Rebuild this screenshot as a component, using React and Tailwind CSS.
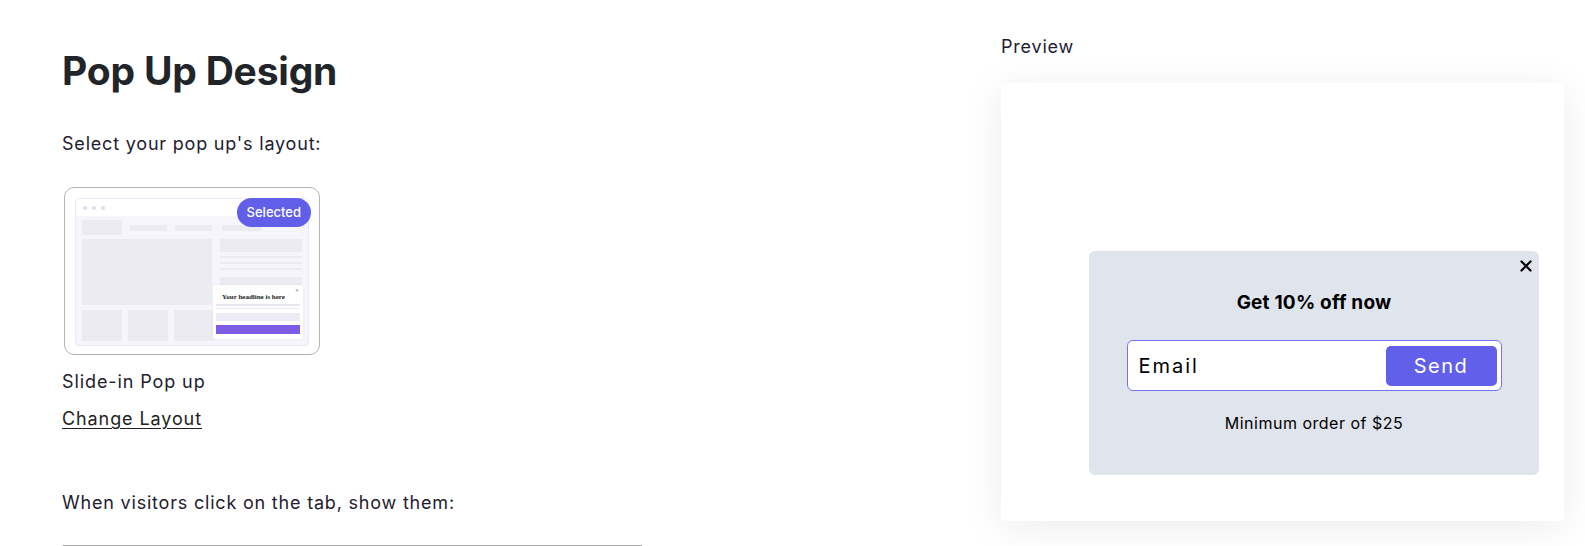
import { X } from "lucide-react";

const Block = ({ className }) => <div className={`bg-[#ecebf1] ${className}`} />;

const LayoutThumb = () => {
  return (
    <div className="relative ml-[2px] w-[256px] h-[168px] rounded-[10px] border border-[#b3b3b3] p-[10px] pl-[10px]">
      {/* browser mockup */}
      <div className="relative w-[234px] h-[148px] rounded-[4px] border border-[#ebe9f7] bg-[#f6f5fc] overflow-hidden">
        <div className="h-[17px] bg-white flex items-center gap-[5px] pl-[7px]">
          <span className="w-[4px] h-[4px] rounded-full bg-[#dddbef]" />
          <span className="w-[4px] h-[4px] rounded-full bg-[#dddbef]" />
          <span className="w-[4px] h-[4px] rounded-full bg-[#dddbef]" />
        </div>
        <div className="px-[6px] pt-[4px]">
          <div className="flex items-center h-[15px]">
            <Block className="w-[40px] h-[15px]" />
            <Block className="ml-[8px] w-[37px] h-[6px]" />
            <Block className="ml-[8px] w-[37px] h-[6px]" />
            <Block className="ml-[10px] w-[40px] h-[6px]" />
          </div>
          <div className="flex mt-[4px]">
            <Block className="w-[130px] h-[66px]" />
            <div className="ml-[8px] w-[82px] flex flex-col">
              <Block className="h-[13px]" />
              <Block className="mt-[4px] h-[2px]" />
              <Block className="mt-[4px] h-[2px]" />
              <Block className="mt-[4px] h-[2px]" />
              <Block className="mt-[7px] h-[9px]" />
            </div>
          </div>
          <div className="flex gap-[6px] mt-[5px]">
            <Block className="w-[40px] h-[31px]" />
            <Block className="w-[40px] h-[31px]" />
            <Block className="w-[40px] h-[31px]" />
          </div>
        </div>
        {/* mini popup */}
        <div className="absolute left-[137px] top-[86px] w-[90px] h-[54px] bg-white rounded-[3px] shadow-[0_0_3px_rgba(0,0,0,0.06)] px-[3px]">
          <span className="absolute right-[4px] top-[1px] text-[6px] leading-[8px] text-[#888]">×</span>
          <div className="pt-[8px] pl-[6px] text-[7px] leading-[8px] font-bold text-[#222] font-['Liberation_Serif',serif]">
            Your headline is here
          </div>
          <div className="mt-[3px] h-[1.5px] bg-[#e8e6f4]" />
          <div className="mt-[2px] h-[1.5px] bg-[#e8e6f4]" />
          <div className="mt-[4px] h-[8px] bg-[#ebeaf5]" />
          <div className="mt-[4px] h-[9px] bg-[#7d5ce5]" />
        </div>
      </div>
      <span className="absolute right-[8px] top-[10px] h-[29px] px-[10px] rounded-full bg-[#615fea] text-white text-[13px] leading-[29px] font-medium">
        Selected
      </span>
    </div>
  );
};

const App = () => {
  return (
    <div className="flex w-full min-h-[546px] bg-white font-['Inter',sans-serif] text-[#1e2030] overflow-hidden">
      <div className="w-[1001px] pl-[62px] pt-[44px] shrink-0">
        <h1 className="text-[39px] leading-[54px] font-bold text-[#212429] tracking-[-0.2px]">
          Pop Up Design
        </h1>
        <p className="mt-[33px] text-[18px] leading-[26px] tracking-[0.8px]">Select your pop up's layout:</p>
        <div className="mt-[30px]">
          <LayoutThumb />
        </div>
        <p className="mt-[14px] text-[18px] leading-[26px] tracking-[0.9px]">Slide-in Pop up</p>
        <a href="#" className="block mt-[11px] text-[18px] leading-[26px] tracking-[0.9px] underline underline-offset-[3px] text-[#222]">
          Change Layout
        </a>
        <p className="mt-[58px] text-[18px] leading-[26px] tracking-[0.8px]">When visitors click on the tab, show them:</p>
        <div className="mt-[29px] w-[579px] ml-[1px] border-t border-[#a3a3a3] h-[10px]" />
      </div>

      <div className="w-[563px] pt-[35px] shrink-0">
        <p className="text-[18px] leading-[24px] tracking-[0.8px]">Preview</p>
        <div className="mt-[24px] h-[438px] bg-white rounded-[4px] shadow-[0_6px_40px_rgba(0,0,0,0.08)] flex justify-end items-end pr-[25px] pb-[46px]">
          <div className="relative w-[450px] h-[224px] rounded-[6px] bg-[#e0e4ec] flex flex-col items-center pt-[38px] text-black">
            <X className="absolute right-[4px] top-[6px]" size={18} strokeWidth={3} />
            <p className="text-[19px] leading-[28px] font-bold tracking-[0.2px]">Get 10% off now</p>
            <div className="mt-[23px] w-[375px] h-[51px] rounded-[6px] border border-[#7572f6] bg-white flex items-center justify-between pl-[11px] pr-[4px]">
              <span className="text-[20px] tracking-[2px]">Email</span>
              <button className="w-[111px] h-[40px] rounded-[5px] bg-[#625fea] text-white text-[20px] tracking-[1.5px]">
                Send
              </button>
            </div>
            <p className="mt-[20px] text-[16px] leading-[24px] tracking-[0.5px]">Minimum order of $25</p>
          </div>
        </div>
      </div>
    </div>
  );
};

export default App;
